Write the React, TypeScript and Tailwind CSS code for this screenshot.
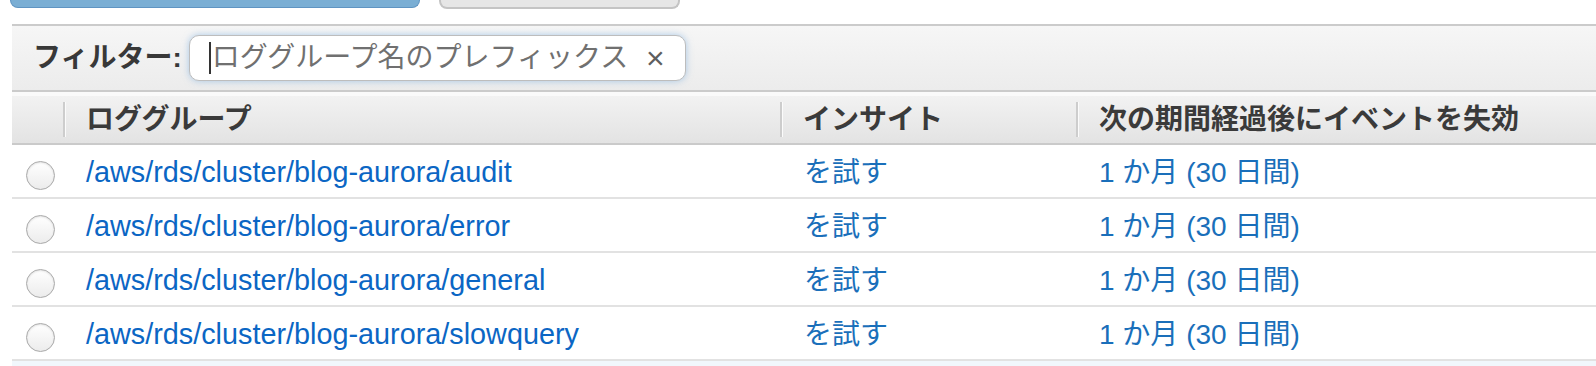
import React from "react";

const rows = [
  "/aws/rds/cluster/blog-aurora/audit",
  "/aws/rds/cluster/blog-aurora/error",
  "/aws/rds/cluster/blog-aurora/general",
  "/aws/rds/cluster/blog-aurora/slowquery",
];

const FONT = { fontFamily: '"Liberation Sans", "Noto Sans CJK JP", sans-serif' };

function Sep() {
  return <div className="w-[3px] h-[35px] border-l-2 border-r border-l-[#cdcdcd] border-r-[#fbfbfb] shrink-0" />;
}

function Radio() {
  return (
    <div className="w-[29px] h-[29px] rounded-full border border-[#a9a9a9] bg-gradient-to-b from-[#ffffff] to-[#ececec] shadow-[inset_0_1px_2px_rgba(0,0,0,0.12)]" />
  );
}

export default function App() {
  return (
    <div className="w-[1596px] h-[366px] overflow-hidden bg-white pl-[12px]" style={FONT}>
      {/* top buttons (cut off) */}
      <div className="flex items-start gap-[19px] h-[24px]">
        <div className="w-[410px] h-[8px] -ml-[2px] rounded-b-[8px] bg-[#7aaed4] border-b border-x border-[#5f94c2]" />
        <div className="w-[241px] h-[9px] rounded-b-[8px] bg-[#e6e6e6] border-b-2 border-x-2 border-[#c4c4c4]" />
      </div>

      {/* filter bar */}
      <div className="h-[68px] border-y-2 border-[#cbcbcb] bg-gradient-to-b from-[#f6f6f6] to-[#ececec] flex items-center pl-[21px]">
        <span className="text-[28px] font-bold text-[#383838] leading-none">フィルター:</span>
        <div className="ml-[7px] w-[497px] h-[46px] rounded-[10px] bg-white border border-[#bdbdbd] shadow-[0_0_7px_rgba(110,165,220,0.55)] flex items-center pl-[19px] pr-[20px]">
          <span className="w-[2px] h-[32px] bg-[#333] shrink-0" />
          <span className="ml-[1px] text-[28px] text-[#707070] leading-none whitespace-nowrap">ロググループ名のプレフィックス</span>
          <span className="ml-auto text-[32px] text-[#5e5e5e] leading-none">×</span>
        </div>
      </div>

      <div className="h-[4px] bg-[#fafafa]" />

      {/* header */}
      <div className="grid grid-cols-[51px_717px_296px_1fr] h-[49px] border-b-2 border-[#cacaca] bg-gradient-to-b from-[#f2f2f2] to-[#e3e3e3] text-[28px] font-bold text-[#3a3a3a]">
        <div />
        <div className="flex items-center">
          <Sep />
          <span className="ml-[20px] leading-none">ロググループ</span>
        </div>
        <div className="flex items-center">
          <Sep />
          <span className="ml-[20px] leading-none">インサイト</span>
        </div>
        <div className="flex items-center">
          <Sep />
          <span className="ml-[20px] leading-none whitespace-nowrap">次の期間経過後にイベントを失効</span>
        </div>
      </div>

      {/* rows */}
      {rows.map((r) => (
        <div
          key={r}
          className="grid grid-cols-[51px_717px_296px_1fr] h-[54px] border-b-2 border-[#e2e2e2] bg-white items-center pt-[3px]"
        >
          <div className="pl-[14px] pt-[6px]">
            <Radio />
          </div>
          <div className="pl-[23px] text-[28.8px] text-[#0b66c4] leading-none whitespace-nowrap">{r}</div>
          <div className="pl-[24px] text-[28px] text-[#1a6fba] leading-none">を試す</div>
          <div className="pl-[23px] text-[28px] text-[#1a6fba] leading-none whitespace-nowrap">1 か月 (30 日間)</div>
        </div>
      ))}
      <div className="h-[20px] bg-[#f1f7fc]" />
    </div>
  );
}
